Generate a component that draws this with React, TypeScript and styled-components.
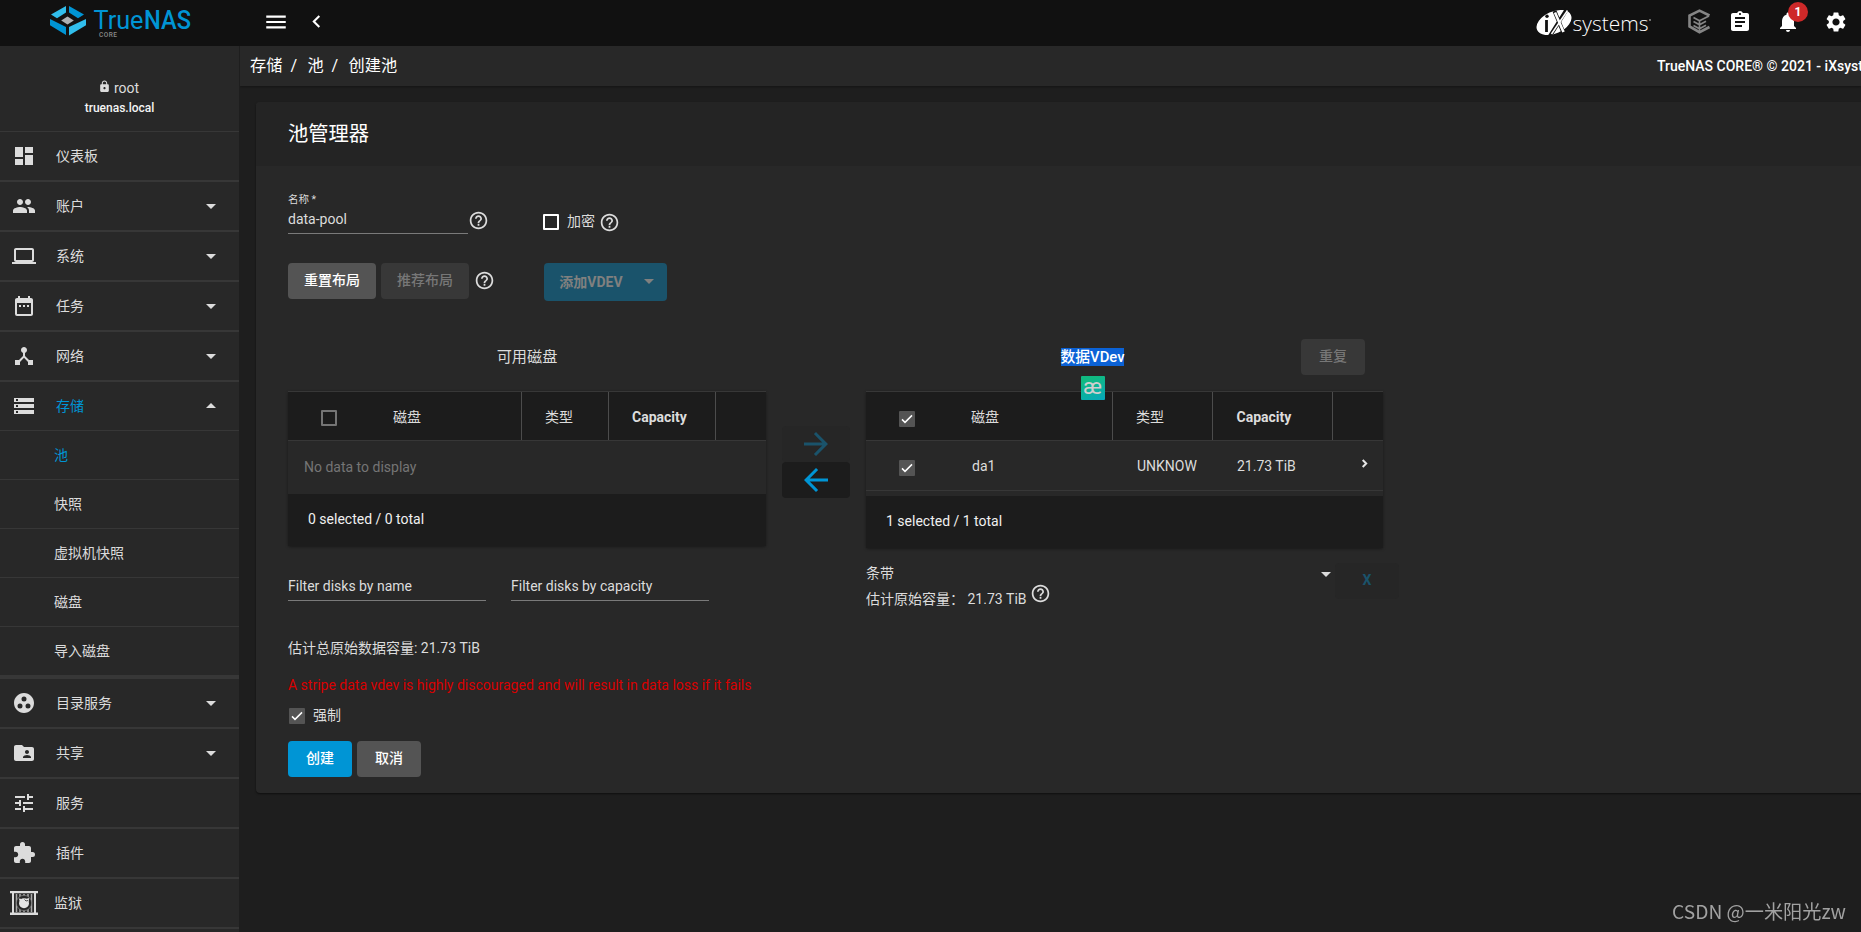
import React from 'react';
import styled, { createGlobalStyle, css } from 'styled-components';
import {
  MdDashboard, MdPeople, MdLaptop, MdDateRange, MdDeviceHub, MdStorage, MdGroupWork,
  MdFolderShared, MdTune, MdExtension, MdArrowDropDown, MdArrowDropUp, MdMenu,
  MdChevronLeft, MdAssignment, MdNotifications, MdSettings, MdLock,
  MdHelpOutline, MdArrowForward, MdArrowBack,
} from 'react-icons/md';

const GlobalStyle = createGlobalStyle`
  * { box-sizing: border-box; }
  body {
    margin: 0;
    background: #1e1e1e;
    color: #dcdcdc;
    font: 400 14px/20px Roboto, 'Noto Sans CJK SC', sans-serif;
    overflow: hidden;
  }
`;

const Page = styled.div`
  display: grid;
  grid-template-columns: 240px minmax(0, 1fr);
  grid-template-rows: 46px minmax(0, 1fr);
  width: 100vw;
  height: 100vh;
  overflow: hidden;
`;

const Brand = styled.div`
  background: #111;
  padding: 6px 0 0 49px;
`;

const TopBar = styled.header`
  background: #111;
  color: #fff;
  display: flex;
  align-items: center;
  padding: 0 1px 0 23px;
`;

const TopIcon = styled.span<{ $w: number; $ml?: number }>`
  position: relative;
  display: flex;
  flex: none;
  justify-content: center;
  width: ${p => p.$w}px;
  margin-left: ${p => p.$ml ?? 0}px;
  padding-bottom: 3px;
  svg { flex: none; }
`;

const Spacer = styled.div`
  flex: 1;
`;

const Count = styled.span`
  position: absolute;
  left: 24px;
  top: -8px;
  width: 20px;
  height: 20px;
  border-radius: 50%;
  background: #ce2929;
  color: #fff;
  font: 700 12px/20px Roboto, sans-serif;
  text-align: center;
`;

const Sidebar = styled.nav`
  background: #282828;
  border-right: 1px solid #1e1e1e;
  overflow: hidden;
`;

const User = styled.div`
  height: 86px;
  border-bottom: 1px solid #373737;
  padding-top: 32px;
  text-align: center;
`;

const UserName = styled.div`
  display: flex;
  justify-content: center;
  align-items: center;
  gap: 3px;
  height: 20px;
  padding-right: 2px;
  svg { margin-bottom: 3px; }
`;

const HostName = styled.div`
  font-size: 12px;
  font-weight: 500;
  line-height: 20px;
  color: #f4f4f4;
`;

const NavRow = styled.div<{ $line?: number; $tight?: boolean }>`
  display: flex;
  align-items: center;
  box-sizing: content-box;
  height: 48px;
  padding: 0 16px 0 ${p => (p.$tight ? 10 : 12)}px;
  border-bottom: ${p => p.$line ?? 2}px solid #373737;
  svg { flex: none; }
`;

const NavLabel = styled.span<{ $active?: boolean; $gap: number }>`
  flex: 1;
  margin-left: ${p => p.$gap}px;
  color: ${p => (p.$active ? '#0095d5' : '#dcdcdc')};
`;

const SubRow = styled.div<{ $active?: boolean; $last?: boolean }>`
  box-sizing: content-box;
  height: 48px;
  line-height: 49px;
  padding-left: 54px;
  color: ${p => (p.$active ? '#0095d5' : '#dcdcdc')};
  border-bottom: ${p => (p.$last ? 4 : 1)}px solid #373737;
`;

const Main = styled.main`
  min-width: 0;
  overflow: hidden;
  display: flex;
  flex-direction: column;
`;

const Crumbs = styled.div`
  flex: none;
  display: flex;
  align-items: center;
  height: 40px;
  padding-left: 10px;
  background: #282828;
  color: #fff;
  font-size: 16.2px;
  white-space: pre;
  overflow: hidden;
  box-shadow: 0 1px 2px #0005;
`;

const Slash = styled.span`
  width: 25px;
  padding-left: 8px;
`;

const Copyright = styled.span`
  margin-left: auto;
  width: 204px;
  font-size: 14px;
  font-weight: 500;
`;

const Card = styled.section`
  flex: none;
  margin: 16px -20px 0 16px;
  height: 691px;
  background: #282828;
  border-radius: 4px;
  box-shadow: 0 1px 2px #0008;
`;

const CardTitle = styled.h1`
  margin: 0;
  height: 64px;
  padding-left: 32px;
  border-radius: 4px 0 0 0;
  background: #242424;
  color: #fff;
  font-size: 20.3px;
  font-weight: 400;
  line-height: 65px;
`;

const CardBody = styled.div`
  padding: 26px 32px 0;
`;

const Row = styled.div<{ $h: number }>`
  display: flex;
  align-items: flex-start;
  height: ${p => p.$h}px;
`;

const Field = styled.div<{ $w: number; $gap?: number }>`
  flex: none;
  width: ${p => p.$w}px;
  margin-right: ${p => p.$gap ?? 0}px;
  border-bottom: 1px solid #7a7a7a;
`;

const FilterField = styled(Field)`
  height: 39px;
  padding-top: 14px;
`;

const FieldLabel = styled.div`
  font-size: 10.5px;
  line-height: 15px;
`;

const FieldValue = styled.div`
  height: 26px;
  line-height: 24px;
`;

const Help = styled.span<{ $l: number; $t: number }>`
  display: inline-flex;
  flex: none;
  margin: ${p => p.$t}px 0 0 ${p => p.$l}px;
  font-size: 21px;
`;

const CheckLabel = styled.label<{ $ml?: number; $mt?: number }>`
  display: flex;
  align-items: center;
  height: 20px;
  margin: ${p => p.$mt ?? 0}px 0 0 ${p => p.$ml ?? 0}px;
`;

const CheckText = styled.span`
  margin: 0 0 2px 8px;
`;

const Box = styled.span<{ $tone: 'white' | 'grey' | 'filled' }>`
  display: inline-flex;
  flex: none;
  width: 16px;
  height: 16px;
  border-radius: 1px;
  ${p => p.$tone === 'filled'
    ? css`background: #545454;`
    : css`border: 2px solid ${p.$tone === 'white' ? '#fff' : '#757575'};`}
`;

const Button = styled.button<{ $w: number; $kind: 'grey' | 'off' | 'primary'; $gap?: number; $ml?: number }>`
  display: flex;
  flex: none;
  align-items: center;
  justify-content: center;
  width: ${p => p.$w}px;
  height: 36px;
  margin: 0 ${p => p.$gap ?? 0}px 0 ${p => p.$ml ?? 0}px;
  padding: 0 0 4px;
  border: 0;
  border-radius: 4px;
  font: 500 14px Roboto, 'Noto Sans CJK SC', sans-serif;
  background: ${p => ({ grey: '#545454', off: '#383838', primary: '#0095d5' })[p.$kind]};
  color: ${p => (p.$kind === 'off' ? '#777' : '#fff')};
`;

const VdevButton = styled(Button)`
  height: 38px;
  padding: 0 0 2px 9px;
  background: #1a536b;
  color: #80807f;
`;

const DropLabel = styled.span`
  margin-right: 14px;
  font-weight: 700;
`;

const Heading = styled.div<{ $w: number }>`
  flex: none;
  width: ${p => p.$w}px;
  text-align: center;
  font-size: 15.2px;
  line-height: 36px;
`;

const Selected = styled.span`
  position: relative;
  display: inline-block;
  height: 18px;
  line-height: 18px;
  background: #0b62d6;
  color: #fff;
  font-size: 14.8px;
  font-weight: 500;
`;

const Translate = styled.span`
  position: absolute;
  left: 20px;
  top: 28px;
  width: 24px;
  height: 24px;
  z-index: 2;
  border-radius: 1px;
  background: linear-gradient(160deg, #10b981 20%, #06a8bd);
  color: #cfcfcf;
  font: 400 22px/21px Roboto, sans-serif;
  text-align: center;
`;

const Table = styled.div<{ $w: number }>`
  flex: none;
  width: ${p => p.$w}px;
  border-radius: 2px;
  box-shadow: 0 1px 3px #0006;
`;

const HeadRow = styled.div<{ $cols: string }>`
  display: grid;
  grid-template-columns: ${p => p.$cols};
  height: 50px;
  border: 1px solid #373737;
  border-width: 1px 0;
  background: #1c1c1c;
`;

const BodyRow = styled(HeadRow)`
  border-top: 0;
  background: #282828;
`;

const Cell = styled.div<{ $pl: number; $pt?: number; $rule?: boolean; $bold?: boolean }>`
  display: flex;
  align-items: center;
  padding: ${p => p.$pt ?? 0}px 0 0 ${p => p.$pl}px;
  border-right: ${p => (p.$rule ? '1px solid #4c4c4c' : '0')};
  font-weight: ${p => (p.$bold ? 700 : 400)};
`;

const HeadText = styled(Cell)`
  padding-top: 2px;
`;

const OpenRow = styled(Cell)`
  padding-bottom: 4px;
`;

const Empty = styled.div`
  height: 53px;
  padding-left: 16px;
  line-height: 53px;
  color: #757575;
`;

const Foot = styled.div<{ $mt?: number }>`
  height: 52px;
  margin-top: ${p => p.$mt ?? 0}px;
  padding-left: 20px;
  line-height: 50px;
  background: #1c1c1c;
  color: #f0f0f0;
`;

const Movers = styled.div`
  flex: none;
  width: 68px;
  margin: 35px 16px 0;
`;

const Mover = styled.div<{ $off?: boolean }>`
  display: flex;
  align-items: center;
  justify-content: center;
  height: 36px;
  border-radius: 4px;
  font-size: 36px;
  background: ${p => (p.$off ? '#262626' : '#1c1c1c')};
  color: ${p => (p.$off ? '#1a536b' : '#0095d5')};
`;

const Layout = styled.div`
  flex: none;
  width: 455px;
  padding-top: 1px;
`;

const LayoutName = styled.div`
  display: flex;
  justify-content: space-between;
  height: 20px;
  svg { margin: -1px -17px 0 0; }
`;

const Estimate = styled.div`
  display: flex;
  height: 24px;
  line-height: 32px;
`;

const Remove = styled.div`
  flex: none;
  width: 64px;
  height: 36px;
  margin: 1px 0 0 14px;
  border-radius: 4px;
  background: #262626;
  color: #1a536b;
  font-weight: 700;
  line-height: 35px;
  text-align: center;
`;

const Warning = styled.div`
  height: 31px;
  color: #d80000;
`;

const Watermark = styled.div`
  position: fixed;
  right: 15px;
  bottom: 9px;
  color: #a2a2a2;
  font: 400 19.2px/24px 'Noto Sans CJK SC', sans-serif;
  white-space: nowrap;
`;

const WordMark = styled.svg`
  display: block;
  flex: none;
`;

const Check = ({ tone }: { tone: 'white' | 'grey' | 'filled' }) => (
  <Box $tone={tone}>
    {tone === 'filled' && (
      <svg width="16" height="16" viewBox="0 0 16 16" fill="none" stroke="#fff" strokeWidth="1.5">
        <path d="M3 8.4 6 11.4 13 4.4" />
      </svg>
    )}
  </Box>
);

const HelpIcon = ({ l, t }: { l: number; t: number }) => (
  <Help $l={l} $t={t}><MdHelpOutline /></Help>
);

const RowChevron = () => (
  <svg width="17" height="17" viewBox="0 0 17 17" fill="none" stroke="#e6e6e6" strokeWidth="2">
    <path d="M6.700 5 10.200 8.500 6.700 12" />
  </svg>
);

const TrueNasLogo = () => (
  <WordMark width="146" height="34" viewBox="0 0 146 34">
    <path fill="#31beec" d="M17 0v6.5L8 12.2 2 8.6zM37 13v6.2L20 29.5V21z" />
    <path fill="#0095d5" d="M20 0v6.5l9 5.700 6-3.600zM1 13v6.200L17 29V21z" />
    <path fill="#aeb0b2" d="m18.500 10.500 6.300 4-6.300 4-6.300-4z" />
    <text x="44.500" y="22.700" fill="#0095d5" fontFamily="Roboto" fontSize="26" fontWeight="400" textLength="50" lengthAdjust="spacingAndGlyphs">True</text>
    <text x="95" y="22.700" fill="#0095d5" fontFamily="Roboto" fontSize="26" fontWeight="500" textLength="47" lengthAdjust="spacingAndGlyphs">NAS</text>
    <text x="50" y="31" fill="#8b8b8b" fontFamily="Roboto" fontSize="6.500" fontWeight="500" textLength="18">CORE</text>
  </WordMark>
);

const IxLogo = () => (
  <WordMark width="118" height="30" viewBox="0 0 118 30">
    <ellipse cx="18" cy="14.500" rx="18.500" ry="11" fill="#fff" transform="rotate(-24 18 14.500)" />
    <path d="M14 28 31 1M18.500 3 28 26" stroke="#111" strokeWidth="4" fill="none" />
    <path d="M10.500 12v12" stroke="#111" strokeWidth="2.800" />
    <circle cx="11" cy="8.300" r="1.700" fill="#111" />
    <path d="M15.500 26 31.500 2.500" stroke="#fff" strokeWidth="1.600" />
    <path d="M19 4.500 27.500 24" stroke="#fff" strokeWidth="2.600" />
    <text x="36.500" y="22.500" fill="#fff" fontFamily="Open Sans" fontWeight="300" fontSize="21" textLength="76" lengthAdjust="spacingAndGlyphs">systems</text>
    <path d="M113 12h2" stroke="#ccc" />
  </WordMark>
);

const CommandIcon = () => (
  <svg width="23" height="25" viewBox="0 0 23 25" fill="none" stroke="#858585" strokeWidth="2.600">
    <path d="M21.500 6.500 11.500 1.600 1.500 6.500v11l10 5.700 10-5.200" />
    <path d="M5.500 8.500l6 3.200L21 7M5.500 12.500l6 3.200 6.500-3.500M5.500 16.500l6 3.200 6.500-3.500M11.500 12v10" strokeWidth="1.700" />
  </svg>
);

const JailIcon = () => (
  <svg width="28" height="24" viewBox="0 0 28 24">
    <path fill="#dcdcdc" d="M0 0h28v2.200H0zM0 21.500h28V24H0z" />
    <path stroke="#dcdcdc" strokeWidth="2" d="M3 2v20M25 2v20" />
    <path stroke="#aaa" strokeWidth="1.500" d="M6.500 3v18M21.500 3v18M10 3v18M18 3v18M14 3v18" />
    <circle cx="14" cy="12" r="7.700" fill="#282828" stroke="#999" strokeWidth=".6" />
    <circle cx="14" cy="12.300" r="5" fill="#e4e4e4" />
    <path fill="#e4e4e4" d="M8.800 7.500 12 8 10 11zM19.200 7 18.500 11 15.500 8z" />
    <path stroke="#282828" strokeWidth=".8" d="M14.500 8.500 16 10 18 9.500" fill="none" />
  </svg>
);

type NavItem = { icon: React.ReactNode; label: string; caret?: boolean };

const upper: NavItem[] = [
  { icon: <MdDashboard size={24} />, label: '仪表板' },
  { icon: <MdPeople size={24} />, label: '账户', caret: true },
  { icon: <MdLaptop size={24} />, label: '系统', caret: true },
  { icon: <MdDateRange size={24} />, label: '任务', caret: true },
  { icon: <MdDeviceHub size={24} />, label: '网络', caret: true },
];

const storage = ['池', '快照', '虚拟机快照', '磁盘', '导入磁盘'];

const lower: NavItem[] = [
  { icon: <MdGroupWork size={24} />, label: '目录服务', caret: true },
  { icon: <MdFolderShared size={24} />, label: '共享', caret: true },
  { icon: <MdTune size={24} />, label: '服务' },
  { icon: <MdExtension size={24} />, label: '插件' },
];

const NavEntry = ({ icon, label, caret }: NavItem) => (
  <NavRow>
    {icon}
    <NavLabel $gap={20}>{label}</NavLabel>
    {caret && <MdArrowDropDown size={24} />}
  </NavRow>
);

export default function App() {
  return (
    <>
      <GlobalStyle />
      <Page>
        <Brand><TrueNasLogo /></Brand>
        <TopBar>
          <TopIcon $w={26}><MdMenu size={26} /></TopIcon>
          <TopIcon $w={54}><MdChevronLeft size={25} /></TopIcon>
          <Spacer />
          <IxLogo />
          <TopIcon $w={57} $ml={17}><CommandIcon /></TopIcon>
          <TopIcon $w={24}><MdAssignment size={24} /></TopIcon>
          <TopIcon $w={48} $ml={12}>
            <MdNotifications size={24} />
            <Count>1</Count>
          </TopIcon>
          <TopIcon $w={48}><MdSettings size={24} /></TopIcon>
        </TopBar>

        <Sidebar>
          <User>
            <UserName><MdLock size={13} />root</UserName>
            <HostName>truenas.local</HostName>
          </User>
          {upper.map(item => <NavEntry key={item.label} {...item} />)}
          <NavRow $line={1}>
            <MdStorage size={24} />
            <NavLabel $gap={20} $active>存储</NavLabel>
            <MdArrowDropUp size={24} />
          </NavRow>
          {storage.map((label, i) => (
            <SubRow key={label} $active={i === 0} $last={i === storage.length - 1}>{label}</SubRow>
          ))}
          {lower.map(item => <NavEntry key={item.label} {...item} />)}
          <NavRow $tight>
            <JailIcon />
            <NavLabel $gap={16}>监狱</NavLabel>
          </NavRow>
        </Sidebar>

        <Main>
          <Crumbs>
            <span>存储</span><Slash>/</Slash>
            <span>池</span><Slash>/</Slash>
            <span>创建池</span>
            <Copyright>TrueNAS CORE® © 2021 - iXsystems, Inc.</Copyright>
          </Crumbs>

          <Card>
            <CardTitle>池管理器</CardTitle>
            <CardBody>
              <Row $h={71}>
                <Field $w={180}>
                  <FieldLabel>名称 *</FieldLabel>
                  <FieldValue>data-pool</FieldValue>
                </Field>
                <HelpIcon l={0} t={18} />
                <CheckLabel $ml={54} $mt={20}><Check tone="white" /><CheckText>加密</CheckText></CheckLabel>
                <HelpIcon l={4} t={20} />
              </Row>

              <Row $h={76}>
                <Button $w={88} $kind="grey" $gap={5}>重置布局</Button>
                <Button $w={88} $kind="off">推荐布局</Button>
                <HelpIcon l={5} t={7} />
                <VdevButton $w={123} $kind="primary" $ml={49}>
                  <DropLabel>添加VDEV</DropLabel>
                  <MdArrowDropDown size={24} />
                </VdevButton>
              </Row>

              <Row $h={52}>
                <Heading $w={478}>可用磁盘</Heading>
                <Heading $w={653}>
                  <Selected>数据VDev<Translate>æ</Translate></Selected>
                </Heading>
                <Button $w={64} $kind="off" $ml={-118}>重复</Button>
              </Row>

              <Row $h={171}>
                <Table $w={478}>
                  <HeadRow $cols="105px 129px 87px 107px 1fr">
                    <Cell $pl={33} $pt={4}><Check tone="grey" /></Cell>
                    <HeadText $pl={0} $rule>磁盘</HeadText>
                    <HeadText $pl={23} $rule>类型</HeadText>
                    <HeadText $pl={23} $rule $bold>Capacity</HeadText>
                    <Cell $pl={0} />
                  </HeadRow>
                  <Empty>No data to display</Empty>
                  <Foot>0 selected / 0 total</Foot>
                </Table>
                <Movers>
                  <Mover $off><MdArrowForward /></Mover>
                  <Mover><MdArrowBack /></Mover>
                </Movers>
                <Table $w={517}>
                  <HeadRow $cols="105px 142px 100px 120px 1fr">
                    <Cell $pl={33} $pt={6}><Check tone="filled" /></Cell>
                    <HeadText $pl={0} $rule>磁盘</HeadText>
                    <HeadText $pl={23} $rule>类型</HeadText>
                    <HeadText $pl={23.5} $rule $bold>Capacity</HeadText>
                    <Cell $pl={0} />
                  </HeadRow>
                  <BodyRow $cols="106px 142px 100px 120px 1fr">
                    <Cell $pl={33} $pt={5}><Check tone="filled" /></Cell>
                    <Cell $pl={0}>da1</Cell>
                    <Cell $pl={23}>UNKNOW</Cell>
                    <Cell $pl={23}>21.73 TiB</Cell>
                    <OpenRow $pl={22}><RowChevron /></OpenRow>
                  </BodyRow>
                  <Foot $mt={5}>1 selected / 1 total</Foot>
                </Table>
              </Row>

              <Row $h={76}>
                <FilterField $w={198} $gap={25}>Filter disks by name</FilterField>
                <FilterField $w={198} $gap={157}>Filter disks by capacity</FilterField>
                <Layout>
                  <LayoutName>条带<MdArrowDropDown size={24} /></LayoutName>
                  <Estimate>估计原始容量：&nbsp;21.73 TiB<HelpIcon l={3} t={0} /></Estimate>
                </Layout>
                <Remove>X</Remove>
              </Row>

              <Row $h={37}>估计总原始数据容量: 21.73 TiB</Row>
              <Warning>A stripe data vdev is highly discouraged and will result in data loss if it fails</Warning>
              <Row $h={35}>
                <CheckLabel $ml={1}><Check tone="filled" /><CheckText>强制</CheckText></CheckLabel>
              </Row>
              <Row $h={36}>
                <Button $w={64} $kind="primary" $gap={5}>创建</Button>
                <Button $w={64} $kind="grey">取消</Button>
              </Row>
            </CardBody>
          </Card>
        </Main>
      </Page>
      <Watermark>CSDN @一米阳光zw</Watermark>
    </>
  );
}
